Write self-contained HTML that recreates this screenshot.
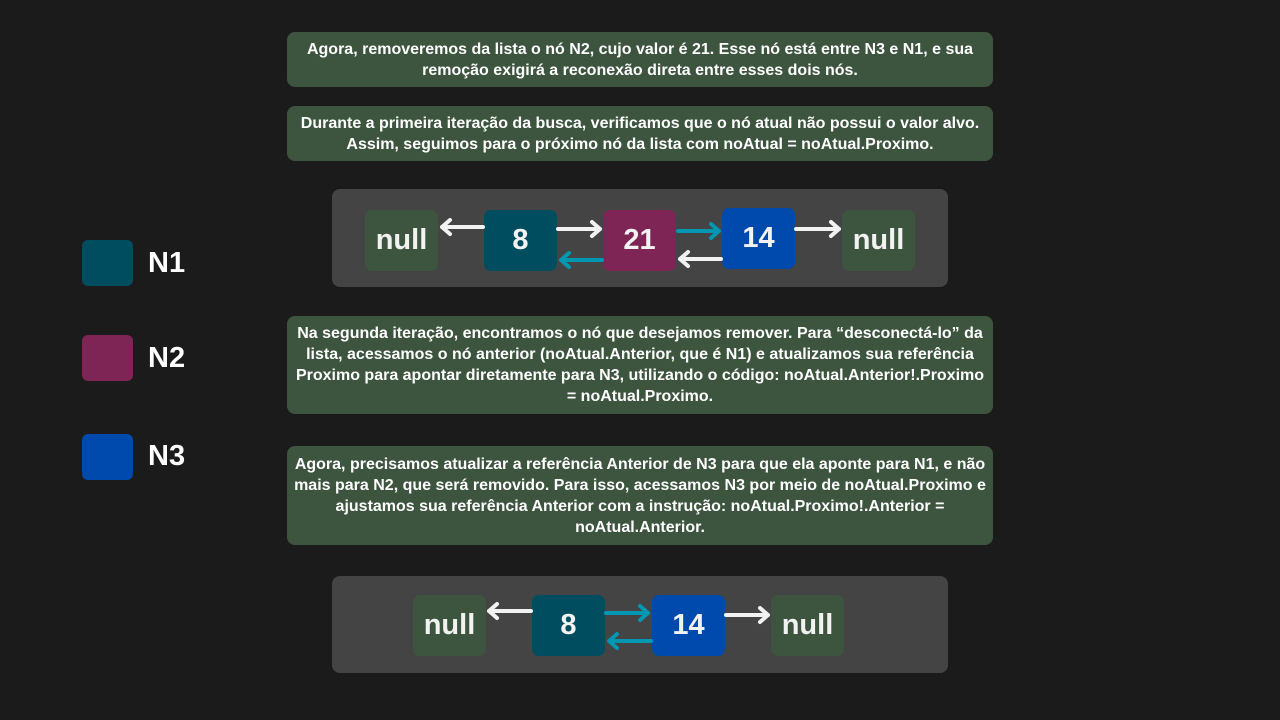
<!DOCTYPE html>
<html><head><meta charset="utf-8"><style>
*{margin:0;padding:0;box-sizing:border-box}
body{width:1280px;height:720px;background:#1b1b1b;position:relative;overflow:hidden;font-family:"Liberation Sans",sans-serif;color:#fff}
.t{position:absolute;left:287px;width:706px;background:#3d553f;border-radius:8px;font-weight:bold;font-size:16px;line-height:21px;text-align:center;display:flex;align-items:center;justify-content:center;padding:0 6px}
.p{position:absolute;left:332px;width:616px;background:#444;border-radius:8px}
.n{position:absolute;width:73px;height:61px;border-radius:7px;display:flex;align-items:center;justify-content:center;font-weight:bold;font-size:29px;color:#f2f2f2}
.g{background:#3d553f}.a{background:#004d60}.b{background:#7e2555}.c{background:#004aad}
.l{position:absolute;left:82px;width:51px;height:46px;border-radius:6px}
.lt{position:absolute;left:148px;font-weight:bold;font-size:29px;line-height:46px}
svg{position:absolute;left:0;top:0}
</style></head><body>
<div class="t" style="top:32px;height:55px">Agora, removeremos da lista o nó N2, cujo valor é 21. Esse nó está entre N3 e N1, e sua remoção exigirá a reconexão direta entre esses dois nós.</div>
<div class="t" style="top:106px;height:55px">Durante a primeira iteração da busca, verificamos que o nó atual não possui o valor alvo. Assim, seguimos para o próximo nó da lista com noAtual = noAtual.Proximo.</div>
<div class="t" style="top:316px;height:98px">Na segunda iteração, encontramos o nó que desejamos remover. Para “desconectá-lo” da lista, acessamos o nó anterior (noAtual.Anterior, que é N1) e atualizamos sua referência Proximo para apontar diretamente para N3, utilizando o código: noAtual.Anterior!.Proximo = noAtual.Proximo.</div>
<div class="t" style="top:446px;height:99px">Agora, precisamos atualizar a referência Anterior de N3 para que ela aponte para N1, e não mais para N2, que será removido. Para isso, acessamos N3 por meio de noAtual.Proximo e ajustamos sua referência Anterior com a instrução: noAtual.Proximo!.Anterior = noAtual.Anterior.</div>

<div class="l a" style="top:240px"></div><div class="lt" style="top:240px">N1</div>
<div class="l b" style="top:335px"></div><div class="lt" style="top:335px">N2</div>
<div class="l c" style="top:434px"></div><div class="lt" style="top:433px">N3</div>

<div class="p" style="top:189px;height:98px"></div>
<div class="n g" style="left:365px;top:210px">null</div>
<div class="n a" style="left:484px;top:210px">8</div>
<div class="n b" style="left:603px;top:210px">21</div>
<div class="n c" style="left:722px;top:208px">14</div>
<div class="n g" style="left:842px;top:210px">null</div>

<div class="p" style="top:576px;height:97px"></div>
<div class="n g" style="left:413px;top:595px">null</div>
<div class="n a" style="left:532px;top:595px">8</div>
<div class="n c" style="left:652px;top:595px">14</div>
<div class="n g" style="left:771px;top:595px">null</div>

<svg width="1280" height="720" fill="none" stroke-width="4" stroke-linecap="round" stroke-linejoin="round">
<g stroke="#f2f2f2">
<path d="M483 227H442M450 220l-8 7 8 7"/>
<path d="M558 229H600M592 222l8 7-8 7"/>
<path d="M721 259H680M688 252l-8 7 8 7"/>
<path d="M796 229H839M831 222l8 7-8 7"/>
<path d="M531 611H489M497 604l-8 7 8 7"/>
<path d="M726 615H768M760 608l8 7-8 7"/>
</g>
<g stroke="#0097b2">
<path d="M602 260H561M569 253l-8 7 8 7"/>
<path d="M678 231H719M711 224l8 7-8 7"/>
<path d="M606 613H648M640 606l8 7-8 7"/>
<path d="M651 641H609M617 634l-8 7 8 7"/>
</g>
</svg>
</body></html>
